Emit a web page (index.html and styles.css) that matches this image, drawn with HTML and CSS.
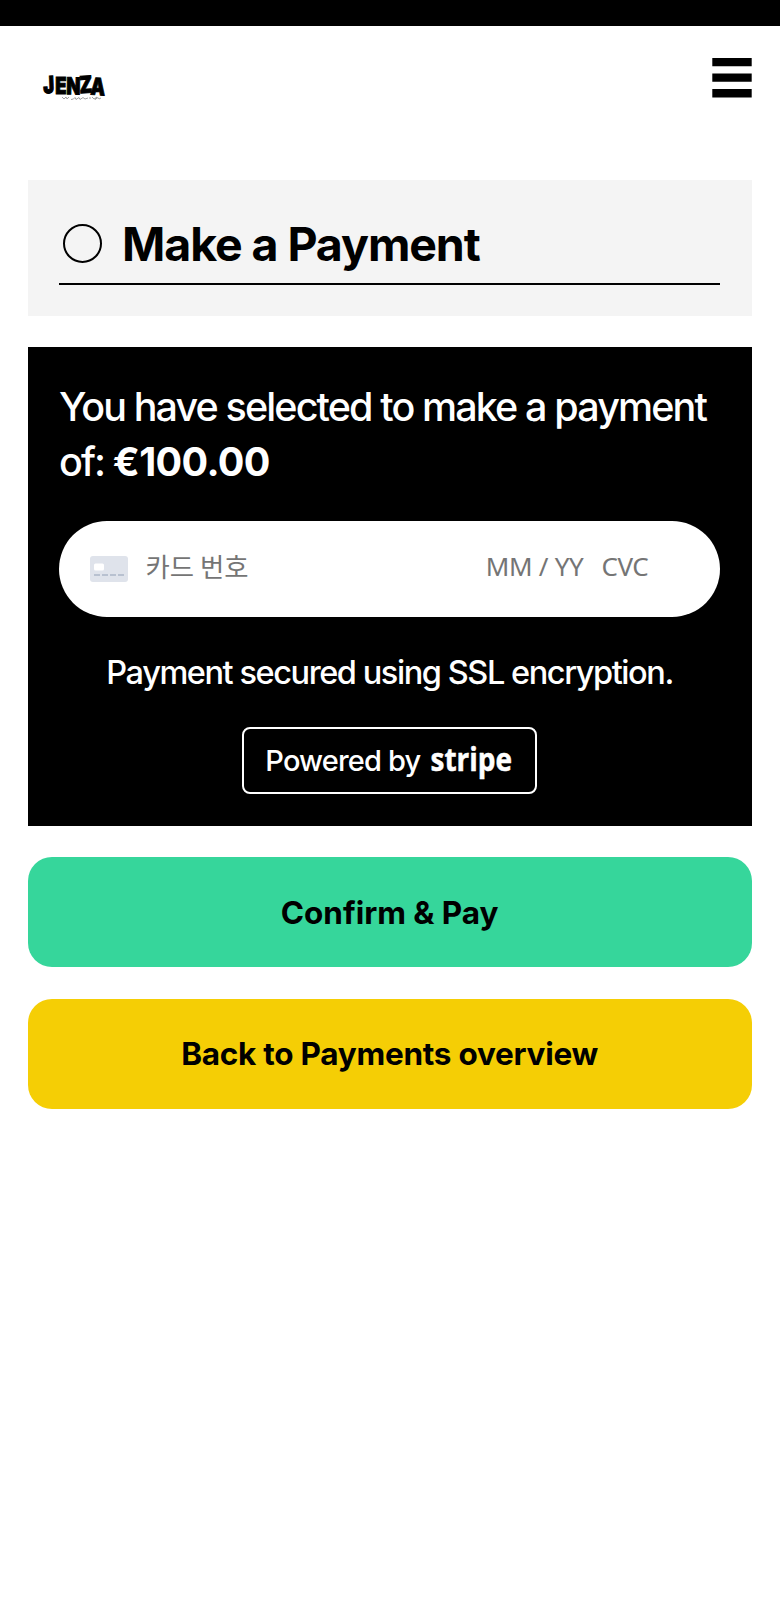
FILE: index.html
```html
<!DOCTYPE html>
<html lang="en">
<head>
<meta charset="utf-8">
<title>Make a Payment</title>
<link rel="stylesheet" href="styles.css">
</head>
<body>
<div class="status-bar"></div>
<header class="header">
  <svg class="logo" width="66" height="28" viewBox="0 0 66 28" role="img" aria-label="Jenza">
    <text class="logo-word" transform="scale(.78 1)" x="2 17 31 48.500 62" y="18.500 18.500 19.300 18.300 19.500" rotate="-3 0 1 -3 3">JENZA</text>
    <path class="logo-script" d="M20 22l2 2 2-2 1 2 2-2M29 24.500q3 0 4-2l1 2 3-2 1 2 3-2 2 1.500 3-1M48 22v2M50 22l2 2 3-2-2 2.500 3-2 1 1.500 2-1"/>
  </svg>
  <svg class="menu" width="40" height="42" viewBox="0 0 40 42">
    <path d="M.3 1.100h39.400v8.200H.3zM.3 16.600h39.400v8.200H.3zM.3 32.100h39.400v8.400H.3z"/>
  </svg>
</header>
<main class="content">
  <section class="title-card">
    <h1 class="title"><span class="ring"></span><span>Make a Payment</span></h1>
  </section>
  <section class="payment">
    <p class="amount">You have selected to make a payment<br>of: <strong>€100.00</strong></p>
    <div class="card-field">
      <svg class="card-icon" width="38" height="26" viewBox="0 0 38 26">
        <rect width="38" height="26" rx="3" fill="#dfe3eb"/>
        <rect x="4" y="7.500" width="10" height="7" rx="1.500" fill="#fff"/>
        <path d="M4 19h30" stroke="#b8c1d0" stroke-width="2" stroke-dasharray="6 2"/>
      </svg>
      <span class="number">카드 번호</span>
      <span class="expiry">MM / YY</span>
      <span class="cvc">CVC</span>
    </div>
    <p class="secured">Payment secured using SSL encryption.</p>
    <div class="badge">
      <span class="powered">Powered by</span>
      <svg class="stripe" width="83" height="40" viewBox="0 0 83 40"><text x="-.500" y="31" textLength="81.500" lengthAdjust="spacingAndGlyphs">stripe</text></svg>
    </div>
  </section>
  <button class="button confirm">Confirm &amp; Pay</button>
  <button class="button back">Back to Payments overview</button>
</main>
</body>
</html>
```
FILE: styles.css
```css
* { box-sizing: border-box; }
body { margin: 0; background: #fff; color: #000; font-family: Inter, "Noto Sans CJK KR", sans-serif; }
h1, p { margin: 0; }
.status-bar { height: 26.300px; background: #000; }
.header { height: 154px; padding: 31px 27.600px 0 42px; display: flex; justify-content: space-between; align-items: flex-start; }
.logo { margin-top: 18px; overflow: visible; }
.logo-word { font: 900 23.500px Inter, sans-serif; stroke: #000; stroke-width: 1; }
.logo-script { fill: none; stroke: #999; stroke-width: .9; }
.content { padding: 0 28.400px 0 27.600px; display: flex; flex-direction: column; gap: 31.600px; }
.title-card { height: 135.400px; padding: 31px 31.400px 0; background: #f4f4f4; }
.title { height: 73.500px; display: flex; align-items: center; gap: 20px; padding: 0 0 7px 4px; border-bottom: 2px solid #000; font-size: 46.500px; line-height: 56px; letter-spacing: -1.080px; white-space: nowrap; }
.ring { width: 39px; height: 39px; border: 2px solid #000; border-radius: 50%; }
.payment { height: 478.300px; padding: 31.500px 31.400px 0; background: #000; color: #fff; display: flex; flex-direction: column; }
.amount { height: 142px; padding-top: 1px; font-size: 39.500px; font-weight: 450; line-height: 55px; letter-spacing: -1.880px; white-space: nowrap; }
.amount strong { letter-spacing: -.65px; }
.card-field { height: 96px; padding: 0 72px 0 31.500px; border-radius: 48px; background: #fff; color: #757575; display: flex; align-items: center; font-family: "Noto Sans", "Noto Sans CJK KR", sans-serif; font-size: 26px; white-space: nowrap; }
.number { margin-left: 17px; padding-bottom: 6px; flex: 1; font-family: "Noto Sans CJK KR", sans-serif; font-size: 26.400px; }
.expiry { margin-right: 18px; padding-bottom: 5px; letter-spacing: -.3px; }
.cvc { padding-bottom: 5px; letter-spacing: -.5px; }
.secured { margin-top: 35px; font-size: 32.500px; font-weight: 450; line-height: 42px; letter-spacing: -1.430px; text-align: center; white-space: nowrap; }
.badge { align-self: center; margin-top: 33.500px; width: 295.500px; height: 67px; border: 2px solid #fff; border-radius: 8px; display: flex; align-items: center; padding: 0 0 1px 21.500px; gap: 11px; white-space: nowrap; }
.powered { width: 155px; font-size: 29px; font-weight: 500; letter-spacing: -.85px; }
.stripe { fill: #fff; font: 700 33px "Open Sans", sans-serif; overflow: visible; stroke: #fff; stroke-width: .5; }
.button { height: 110px; border: 0; border-radius: 24px; padding: 0; color: #000; font: 700 31.500px Inter, sans-serif; }
.confirm { background: #36d69b; letter-spacing: -.050px; }
.back { background: #f5ce05; letter-spacing: -.260px; }
```
